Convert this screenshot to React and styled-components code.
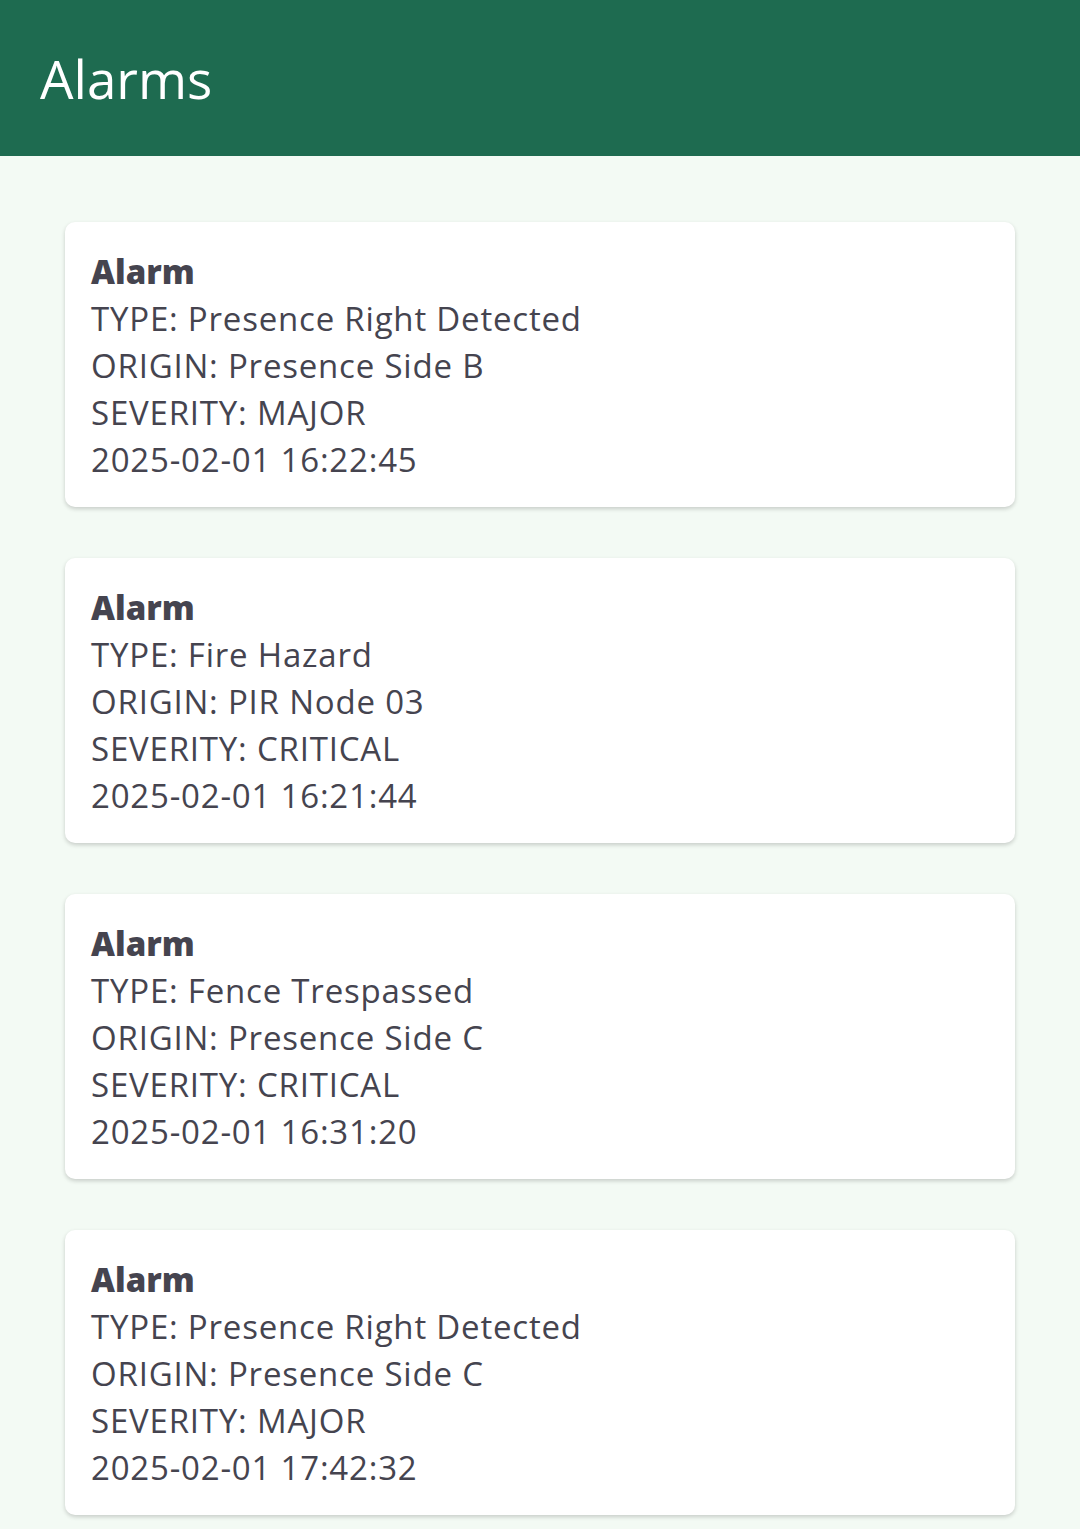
import React from 'react';
import styled, { createGlobalStyle } from 'styled-components';

const GlobalStyle = createGlobalStyle`
  html, body {
    margin: 0;
    padding: 0;
    background-color: #f3faf4;
  }
`;

const Page = styled.div`
  min-height: 1529px;
  background-color: #f3faf4;
  font-family: 'Open Sans', 'Noto Sans', sans-serif;
`;

const Header = styled.header`
  height: 156px;
  display: flex;
  align-items: center;
  padding: 0 40px;
  box-sizing: border-box;
  background-color: #1e6b50;
`;

const Title = styled.h1`
  margin: 0;
  color: #ffffff;
  font-size: 53px;
  font-weight: 400;
`;

const List = styled.div`
  display: flex;
  flex-direction: column;
  gap: 51px;
  padding: 66px 65px 0 65px;
`;

const Card = styled.div`
  background-color: #ffffff;
  border-radius: 10px;
  box-shadow: 0 2px 4px rgba(0, 0, 0, 0.18);
  padding: 26px 26px 24px 26px;
  height: 285px;
  box-sizing: border-box;
`;

const Line = styled.div`
  color: #45444f;
  font-size: 33px;
  line-height: 47px;
  letter-spacing: ${(props) => (props.bold ? '0' : '0.8px')};
  font-weight: ${(props) => (props.bold ? 800 : 400)};
  white-space: nowrap;
`;

const alarms = [
  {
    type: 'Presence Right Detected',
    origin: 'Presence Side B',
    severity: 'MAJOR',
    time: '2025-02-01 16:22:45',
  },
  {
    type: 'Fire Hazard',
    origin: 'PIR Node 03',
    severity: 'CRITICAL',
    time: '2025-02-01 16:21:44',
  },
  {
    type: 'Fence Trespassed',
    origin: 'Presence Side C',
    severity: 'CRITICAL',
    time: '2025-02-01 16:31:20',
  },
  {
    type: 'Presence Right Detected',
    origin: 'Presence Side C',
    severity: 'MAJOR',
    time: '2025-02-01 17:42:32',
  },
];

function App() {
  return (
    <Page>
      <GlobalStyle />
      <Header>
        <Title>Alarms</Title>
      </Header>
      <List>
        {alarms.map((a, i) => (
          <Card key={i}>
            <Line bold>Alarm</Line>
            <Line>TYPE: {a.type}</Line>
            <Line>ORIGIN: {a.origin}</Line>
            <Line>SEVERITY: {a.severity}</Line>
            <Line>{a.time}</Line>
          </Card>
        ))}
      </List>
    </Page>
  );
}

export default App;
